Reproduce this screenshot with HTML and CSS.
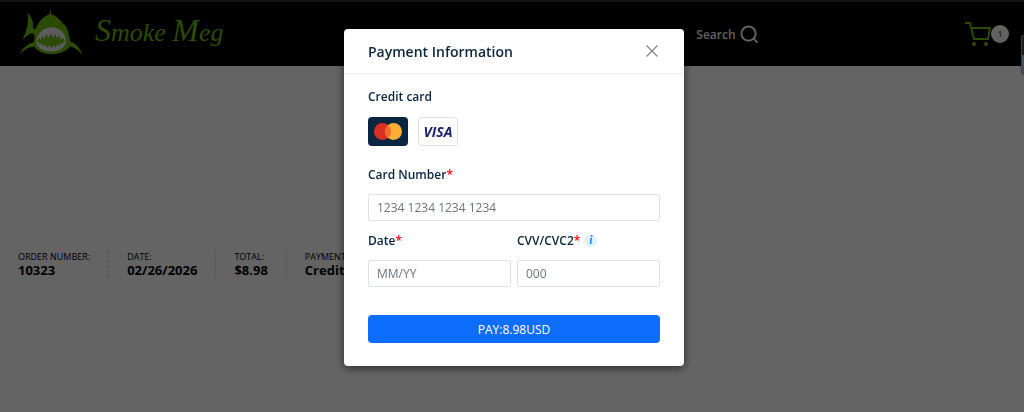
FILE: index.html
```html
<!DOCTYPE html>
<html lang="en">
<head>
    <meta charset="utf-8">
    <title>Smoke Meg - Payment</title>
    <link rel="stylesheet" href="styles.css">
</head>
<body>
    <header class="site-header">
        <a class="brand" href="#">
            <svg class="brand-shark" viewBox="0 0 200 150" aria-hidden="true">
                <path fill="#6cb80a" d="M101 8 L104 24 C123 31 135 45 140 54 C148 58 155 70 157 88 C160 95 160 100 161 107 C179 112 191 127 198 147 C185 132 173 124 159 122 C151 136 130 145 105 145 C79 145 61 137 53 123 C35 123 22 132 8 147 C15 127 31 115 50 109 C54 103 53 94 53 88 C48 76 34 84 17 102 C26 77 37 63 32 20 C46 34 51 51 48 66 C51 70 55 70 58 65 C67 45 80 30 98 24 Z"/>
                <path fill="#e6e3ea" d="M58 108 C62 78 85 63 106 64 C130 65 148 83 149 107 C146 126 128 137 104 137 C80 137 64 129 58 108 Z"/>
                <path fill="#6cb80a" d="M60 107 L68 95 L71 105 L77 88 L83 99 L89 83 L95 96 L103 81 L108 96 L115 83 L121 97 L128 87 L132 101 L139 96 L146 107 L141 107 L138 115 L132 111 L128 121 L122 115 L117 126 L111 118 L105 128 L98 118 L92 127 L86 115 L79 123 L75 112 L69 117 L66 109 Z"/>
            </svg>
            <span class="brand-name"><span class="brand-cap">S</span>moke <span class="brand-cap">M</span>eg</span>
        </a>
        <div class="header-tools">
            <a class="search" href="#">
                Search
                <svg class="search-icon" viewBox="0 0 20 20" aria-hidden="true">
                    <circle cx="9" cy="9" r="7.5"/>
                    <path d="M14 14 L18.5 18.5"/>
                </svg>
            </a>
            <a class="cart" href="#" aria-label="Cart">
                <svg class="cart-icon" viewBox="0 0 26 26" aria-hidden="true">
                    <path d="M0 2 H5 L9 18 H23 L25 7 H6.500"/>
                    <circle cx="9" cy="23" r="2"/>
                    <circle cx="21" cy="23" r="2"/>
                </svg>
                <span class="cart-count">1</span>
            </a>
        </div>
    </header>

    <main>
        <ul class="order-details">
            <li>ORDER NUMBER: <strong>10323</strong></li>
            <li>DATE: <strong>02/26/2026</strong></li>
            <li>TOTAL: <strong>$8.98</strong></li>
            <li>PAYMENT METHOD: <strong>Credit Card</strong></li>
        </ul>
    </main>
    <div class="side-tab"></div>

    <div class="overlay">
        <form class="modal" role="dialog" aria-labelledby="modal-title">
            <div class="modal-header">
                <h2 id="modal-title">Payment Information</h2>
                <button class="close-btn" type="button" aria-label="Close">
                    <svg viewBox="0 0 12 12" aria-hidden="true"><path d="M.5 .5 L11.500 11.500 M11.500 .5 L.5 11.500"/></svg>
                </button>
            </div>
            <div class="modal-body">
                <h3>Credit card</h3>
                <div class="card-types">
                    <svg class="card-logo mastercard" viewBox="0 0 40 29" role="img" aria-label="Mastercard">
                        <circle cx="14.500" cy="14.500" r="8.500" fill="#d93025"/>
                        <circle cx="25.500" cy="14.500" r="8.500" fill="#ffae34"/>
                        <path fill="#f26b2c" d="M20 8 A8.500 8.500 0 0 1 20 21 A8.500 8.500 0 0 1 20 8 Z"/>
                    </svg>
                    <span class="card-logo visa">VISA</span>
                </div>

                <div class="field">
                    <label for="card-number">Card Number<span class="required">*</span></label>
                    <input id="card-number" type="text" placeholder="1234 1234 1234 1234">
                </div>
                <div class="field-row">
                    <div class="field">
                        <label for="card-date">Date<span class="required">*</span></label>
                        <input id="card-date" type="text" placeholder="MM/YY">
                    </div>
                    <div class="field">
                        <label for="card-cvv">CVV/CVC2<span class="required">*</span><span class="info">i</span></label>
                        <input id="card-cvv" type="text" placeholder="000">
                    </div>
                </div>

                <button class="pay-btn" type="submit">PAY:8.98USD</button>
            </div>
        </form>
    </div>
</body>
</html>
```
FILE: styles.css
```css
* {
    box-sizing: border-box;
}
body {
    margin: 0;
    background: #fafafa;
    color: #000;
    font-family: "Segoe UI", "Open Sans", "Noto Sans", sans-serif;
    font-size: 12px;
}
a {
    color: inherit;
    text-decoration: none;
}

/* Page header */
.site-header {
    display: grid;
    grid-template-columns: 68% 1fr;
    align-items: center;
    height: 66px;
    background: #000;
    border-top: 2px solid #2d2d2d;
}
.brand {
    display: flex;
    align-items: center;
    gap: 12px;
    padding: 0 0 6px 17px;
    color: #6cb80a;
}
.brand-shark {
    width: 66px;
    height: 50px;
}
.brand-name {
    font-family: "Liberation Serif", serif;
    font-style: italic;
    font-size: 26px;
    line-height: 40px;
    white-space: nowrap;
}
.brand-cap {
    font-size: 32px;
}
.header-tools {
    display: flex;
    align-items: center;
    justify-content: space-between;
    padding-right: 15px;
}
.search {
    display: flex;
    align-items: center;
    gap: 4px;
    color: #f2f2f2;
    font-size: 12px;
    font-weight: 600;
}
.search-icon {
    width: 19px;
    height: 19px;
    fill: none;
    stroke: #f2f2f2;
    stroke-width: 2;
}
.cart {
    display: flex;
    align-items: center;
    color: #4c8500;
}
.cart-icon {
    width: 26px;
    height: 26px;
    fill: none;
    stroke: #6cb80a;
    stroke-width: 2;
}
.cart-icon circle {
    fill: #6cb80a;
    stroke: none;
}
.cart-count {
    width: 18px;
    height: 18px;
    border-radius: 50%;
    background: #f2f2f2;
    font-size: 9px;
    font-weight: 600;
    line-height: 18px;
    text-align: center;
}

/* Order summary */
.order-details {
    display: flex;
    margin: 184px 0 0;
    padding: 0;
    list-style: none;
}
.order-details li {
    padding: 0 18px;
    border-right: 1px dashed #d3ced2;
    font-size: 9px;
    line-height: 13px;
    white-space: nowrap;
}
.order-details li:last-child {
    border-right: none;
}
.order-details strong {
    display: block;
    font-size: 13px;
    line-height: 15px;
}
.side-tab {
    position: absolute;
    top: 35px;
    right: 0;
    width: 3px;
    height: 40px;
    border: 1px solid #999;
    border-right: none;
    border-radius: 3px 0 0 3px;
    background: linear-gradient(#444 50%, #9bd0ff 50%);
}

/* Payment modal */
.overlay {
    position: fixed;
    inset: 0;
    display: flex;
    justify-content: center;
    align-items: flex-start;
    padding: 29px 0 0 4px;
    background: rgba(0, 0, 0, 0.6);
}
.modal {
    width: 340px;
    background: #fff;
    border-radius: 4px;
    box-shadow: 0 2px 8px rgba(0, 0, 0, 0.6);
    color: #0a2540;
}
.modal-header {
    display: flex;
    align-items: center;
    justify-content: space-between;
    height: 45px;
    padding: 0 26px 0 24px;
    border-bottom: 1px solid #e9ebed;
}
.modal-header h2 {
    margin: 0;
    font-size: 14px;
    font-weight: 600;
}
.close-btn {
    display: flex;
    padding: 0;
    border: none;
    background: none;
    cursor: pointer;
}
.close-btn svg {
    width: 12px;
    height: 12px;
    fill: none;
    stroke: #7f8488;
    stroke-width: 1.2;
}
.modal-body {
    padding: 14px 24px 23px;
}
.modal-body h3 {
    margin: 0 0 11px;
    font-size: 12px;
    font-weight: 600;
    line-height: 18px;
}
.card-types {
    display: flex;
    gap: 10px;
    margin-bottom: 19px;
}
.card-logo {
    width: 40px;
    height: 29px;
    border-radius: 4px;
}
.mastercard {
    background: #0a2540;
}
.visa {
    border: 1px solid #dfe1e5;
    color: #1a1f71;
    font-size: 14px;
    font-style: italic;
    font-weight: 700;
    line-height: 27px;
    text-align: center;
}
.field label {
    display: flex;
    align-items: center;
    height: 18px;
    margin-bottom: 11px;
    font-size: 12px;
    font-weight: 600;
}
.required {
    color: #f00;
}
.info {
    width: 13px;
    height: 13px;
    margin-left: 4px;
    border-radius: 50%;
    background: #e3f0ff;
    color: #1489f5;
    font-family: "Liberation Serif", serif;
    font-style: italic;
    font-weight: 700;
    font-size: 12px;
    line-height: 13px;
    text-align: center;
}
.field input {
    display: block;
    width: 100%;
    height: 27px;
    padding: 0 8px;
    border: 1px solid #dee2e6;
    border-radius: 2px;
    background: #fff;
    font-family: inherit;
    font-size: 12px;
}
.field input::placeholder {
    color: #6c757d;
    opacity: 1;
}
.field-row {
    display: grid;
    grid-template-columns: 1fr 1fr;
    gap: 6px;
    margin-top: 10px;
}
.pay-btn {
    width: 100%;
    height: 28px;
    margin-top: 28px;
    border: none;
    border-radius: 4px;
    background: #0d6efd;
    color: #fff;
    font-family: inherit;
    font-size: 12px;
    cursor: pointer;
}
```
